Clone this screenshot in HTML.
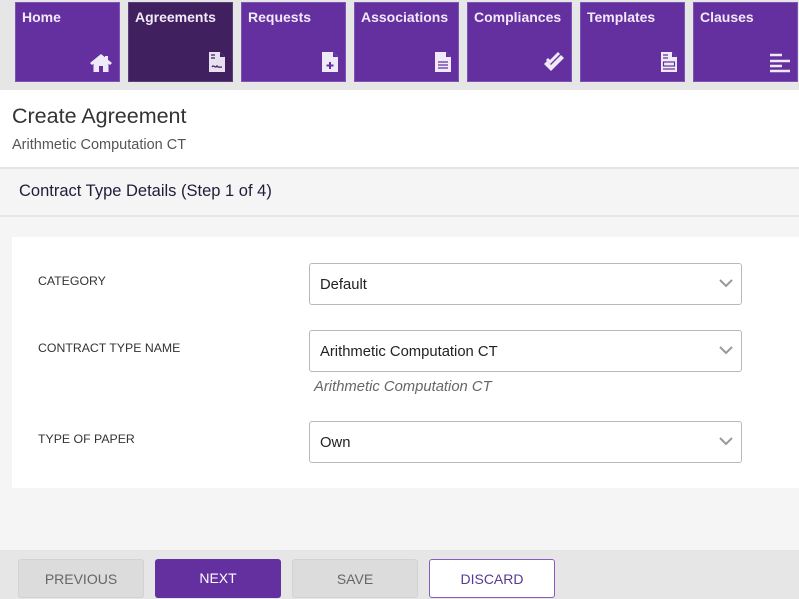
<!DOCTYPE html>
<html><head><style>
*{box-sizing:border-box;margin:0;padding:0}
body{width:799px;height:599px;overflow:hidden;background:#f5f5f5;font-family:"Liberation Sans",sans-serif;position:relative}
.top{position:absolute;left:0;top:0;width:799px;height:90px;background:#e6e6e6}
.tile{position:absolute;top:2px;width:105px;height:80px;background:#6430a0;color:#f0eaf8;font-size:14px;font-weight:bold;padding:6px 0 0 6px;border:1px solid #7d55b5}
.tile.act{background:#41205f;border-color:#5a3f7a}
.tile svg{position:absolute;right:6px;bottom:8px}
.hdr{position:absolute;left:0;top:90px;width:799px;height:79px;background:#fff;border-bottom:2px solid #e4e4e4}
.hdr h1{position:absolute;left:12px;top:14px;font-size:21.5px;font-weight:normal;color:#333}
.hdr p{position:absolute;left:12px;top:47px;font-size:14.5px;color:#555}
.sec{position:absolute;left:0;top:170px;width:799px;height:47px;border-bottom:2px solid #e6e6e6;background:#f5f5f5}
.sec span{position:absolute;left:19px;top:12px;font-size:16.5px;color:#1e1e3a}
.card{position:absolute;left:12px;top:237px;width:787px;height:251px;background:#fff}
.lbl{position:absolute;left:38px;font-size:12.3px;color:#333}
.sel{position:absolute;left:309px;width:433px;height:42px;border:1px solid #b9b9b9;border-radius:3px;background:#fff;font-size:14.8px;color:#222;padding:13px 0 0 10px}
.sel svg{position:absolute;right:8px;top:15px}
.hint{position:absolute;left:314px;top:379px;font-size:14.8px;font-style:italic;color:#666}
.foot{position:absolute;left:0;top:550px;width:799px;height:49px;background:#e6e6e6}
.btn{position:absolute;top:559px;width:110px;height:39px;border-radius:3px;font-size:14px;text-align:center;line-height:39px}
</style></head><body>
<div class="top">
<div class="tile" style="left:15px">Home<svg width="24" height="20" viewBox="0 0 24 20"><path d="M12 1L1 10l2 2 1.5-1.3V19h5.5v-6h4v6h5.5v-8.3L21 12l2-2-4-3.3V3h-3v1.2z" fill="#f0eaf8"/></svg></div>
<div class="tile act" style="left:128px">Agreements<svg width="18" height="22" viewBox="0 0 18 22"><path d="M1 1h11l5 5v15H1z" fill="#e8e0f0"/><path d="M12 1v5h5" fill="#41205f"/><path d="M3 4h4M3 7h4M4 16c2-3 3 2 5-1 1 2 3 1 5 1" stroke="#41205f" stroke-width="1.3" fill="none"/></svg></div>
<div class="tile" style="left:241px">Requests<svg width="18" height="22" viewBox="0 0 18 22"><path d="M1 1h11l5 5v15H1z" fill="#f0eaf8"/><path d="M12 1v5h5" fill="#6430a0"/><path d="M9 11v7M5.5 14.5h7" stroke="#6430a0" stroke-width="2"/></svg></div>
<div class="tile" style="left:354px">Associations<svg width="18" height="22" viewBox="0 0 18 22"><path d="M1 1h11l5 5v15H1z" fill="#f0eaf8"/><path d="M12 1v5h5" fill="#6430a0"/><path d="M4 11h10M4 14h10M4 17h10" stroke="#6430a0" stroke-width="1.2"/></svg></div>
<div class="tile" style="left:467px">Compliances<svg width="24" height="22" viewBox="0 0 24 22"><path d="M3 13l3-3 4 4 10-10 3 3-13 13z" fill="#f0eaf8"/><path d="M6 8l3 3 9-9" stroke="#f0eaf8" stroke-width="3" fill="none"/></svg></div>
<div class="tile" style="left:580px">Templates<svg width="18" height="22" viewBox="0 0 18 22"><path d="M1 1h11l5 5v15H1z" fill="#f0eaf8"/><path d="M12 1v5h5" fill="#6430a0"/><path d="M3 4h5M3 7h5" stroke="#6430a0" stroke-width="1.2"/><rect x="3.5" y="11" width="11" height="4" fill="none" stroke="#6430a0" stroke-width="1.2"/><path d="M3 18h12" stroke="#6430a0" stroke-width="1.2"/></svg></div>
<div class="tile" style="left:693px">Clauses<svg width="22" height="20" viewBox="0 0 22 20"><path d="M1 2h12M1 8h20M1 13h12M1 18h20" stroke="#f0eaf8" stroke-width="2.5"/></svg></div>
</div>
<div class="hdr"><h1>Create Agreement</h1><p>Arithmetic Computation CT</p></div>
<div class="sec"><span>Contract Type Details (Step 1 of 4)</span></div>
<div class="card"></div>
<div class="lbl" style="top:274px">CATEGORY</div>
<div class="lbl" style="top:341px">CONTRACT TYPE NAME</div>
<div class="lbl" style="top:432px">TYPE OF PAPER</div>
<div class="sel" style="top:263px">Default<svg width="14" height="9" viewBox="0 0 14 9"><path d="M1 1l6 6 6-6" stroke="#999" stroke-width="2" fill="none"/></svg></div>
<div class="sel" style="top:330px">Arithmetic Computation CT<svg width="14" height="9" viewBox="0 0 14 9"><path d="M1 1l6 6 6-6" stroke="#999" stroke-width="2" fill="none"/></svg></div>
<div class="hint">Arithmetic Computation CT</div>
<div class="sel" style="top:421px">Own<svg width="14" height="9" viewBox="0 0 14 9"><path d="M1 1l6 6 6-6" stroke="#999" stroke-width="2" fill="none"/></svg></div>
<div class="foot"></div>
<div class="btn" style="left:18px;width:126px;background:#dcdcdc;border:1px solid #d2d2d2;color:#666">PREVIOUS</div>
<div class="btn" style="left:155px;width:126px;background:#6430a0;color:#fff">NEXT</div>
<div class="btn" style="left:292px;width:126px;background:#dcdcdc;border:1px solid #d2d2d2;color:#666">SAVE</div>
<div class="btn" style="left:429px;width:126px;background:#fff;border:1px solid #8a5cc0;color:#5a3a90">DISCARD</div>
</body></html>
